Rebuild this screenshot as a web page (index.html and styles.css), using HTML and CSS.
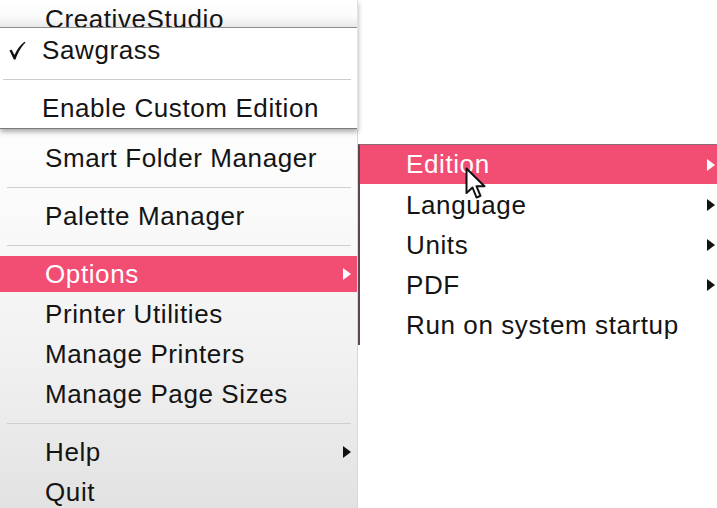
FILE: index.html
```html
<!DOCTYPE html>
<html>
<head>
<meta charset="utf-8">
<link rel="stylesheet" href="styles.css">
</head>
<body>
<div class="screen">
  <div class="main-menu">
    <div class="item">Smart Folder Manager</div>
    <div class="sep"></div>
    <div class="item">Palette Manager</div>
    <div class="sep"></div>
    <div class="item item-active has-sub">Options<span class="arrow"></span></div>
    <div class="item">Printer Utilities</div>
    <div class="item">Manage Printers</div>
    <div class="item">Manage Page Sizes</div>
    <div class="sep"></div>
    <div class="item has-sub">Help<span class="arrow"></span></div>
    <div class="item">Quit</div>

    <div class="popup">
      <div class="pop-top"><div class="pop-item">CreativeStudio</div></div>
      <div class="pop-body">
        <div class="pop-item">
          <svg class="check" width="20" height="20" viewBox="0 0 20 20">
            <path d="M1.5 9.5 L3.5 8.5 L6.5 14 C9 8.5 12 4 16.5 0.8 L17.5 1.6 C13.5 5.5 10.5 10.5 7.5 18.5 L5.8 18.5 Z" fill="#111111"/>
          </svg>Sawgrass</div>
        <div class="pop-sep"></div>
        <div class="pop-item">Enable Custom Edition</div>
      </div>
    </div>
  </div>

  <div class="side">
    <div class="submenu">
      <div class="sub-item sub-active">Edition<span class="arrow"></span></div>
      <div class="sub-item">Language<span class="arrow"></span></div>
      <div class="sub-item">Units<span class="arrow"></span></div>
      <div class="sub-item">PDF<span class="arrow"></span></div>
      <div class="sub-item">Run on system startup</div>
      <svg class="cursor" width="22" height="34" viewBox="0 0 22 34">
        <path d="M1.5 1.5 L1.5 26 L7.5 20.5 L11.5 30.5 L15.5 28.8 L11.5 19.2 L19.5 19.2 Z" fill="#ffffff" stroke="#111111" stroke-width="2" stroke-linejoin="round"/>
      </svg>
    </div>
  </div>
</div>
</body>
</html>
```

FILE: styles.css
```css
html, body {
  margin: 0;
  padding: 0;
  background: #ffffff;
}

.screen {
  width: 717px;
  height: 508px;
  display: flex;
  overflow: hidden;
  font-family: "Liberation Sans", Arial, sans-serif;
  font-size: 26px;
  letter-spacing: 0.6px;
  color: #141414;
}

.main-menu {
  position: relative;
  width: 358px;
  flex: 0 0 358px;
  padding-top: 138px;
  box-sizing: border-box;
  border-right: 1px solid #dcd9cf;
  background: linear-gradient(to bottom, #ffffff 0%, #fcfcfc 35%, #f1f1f1 70%, #e2e2e2 100%);
}

.item {
  position: relative;
  height: 40px;
  line-height: 40px;
  padding-left: 45px;
  white-space: nowrap;
}

.item-active {
  height: 36px;
  line-height: 36px;
  margin: 2px 0;
  background: #f24d73;
  color: #ffffff;
}

.sep {
  height: 18px;
  display: flex;
  align-items: center;
  padding: 0 6px 0 7px;
}

.sep::before {
  content: "";
  flex: 1;
  height: 1px;
  background: #cfcfcf;
}

.arrow {
  position: absolute;
  right: 6px;
  top: 50%;
  margin-top: -6px;
  width: 0;
  height: 0;
  border-left: 8px solid #111111;
  border-top: 6px solid transparent;
  border-bottom: 6px solid transparent;
}

.item-active .arrow,
.sub-active .arrow {
  border-left-color: #ffffff;
}

/* popup overlay (edition list) */
.popup {
  position: absolute;
  left: 0;
  top: 0;
  width: 357px;
  background: #ffffff;
  border-right: 1px solid #e2e2e2;
  box-shadow: 0 3px 5px rgba(0, 0, 0, 0.32);
}

.pop-top {
  height: 27px;
  overflow: hidden;
  display: flex;
  flex-direction: column;
  justify-content: flex-end;
  background: linear-gradient(to bottom, #ffffff 0%, #fbfbfb 60%, #e9e9e9 100%);
  border-bottom: 1px solid #8c8c8c;
}

.pop-top .pop-item {
  margin-bottom: -12px;
  padding-left: 45px;
}

.pop-body {
  padding-top: 2px;
  border-bottom: 1px solid #7a7a7a;
}

.pop-item {
  position: relative;
  height: 40px;
  line-height: 40px;
  padding-left: 42px;
  white-space: nowrap;
}

.check {
  position: absolute;
  left: 8px;
  top: 11px;
}

.pop-sep {
  height: 18px;
  display: flex;
  align-items: center;
  padding: 0 6px 0 3px;
}

.pop-sep::before {
  content: "";
  flex: 1;
  height: 1px;
  background: #cccccc;
}

/* right column with submenu */
.side {
  flex: 1;
  padding-top: 144px;
  background: #ffffff;
}

.submenu {
  position: relative;
  border-left: 2px solid #5e4650;
  border-top: 1px solid #8b6a74;
  background: #ffffff;
}

.sub-item {
  position: relative;
  height: 40px;
  line-height: 40px;
  padding-left: 46px;
  white-space: nowrap;
}

.sub-item .arrow {
  right: 2px;
}

.sub-active {
  height: 39px;
  line-height: 39px;
  margin-bottom: 1px;
  background: #f24d73;
  color: #ffffff;
}

.cursor {
  position: absolute;
  left: 105px;
  top: 22px;
}
```
